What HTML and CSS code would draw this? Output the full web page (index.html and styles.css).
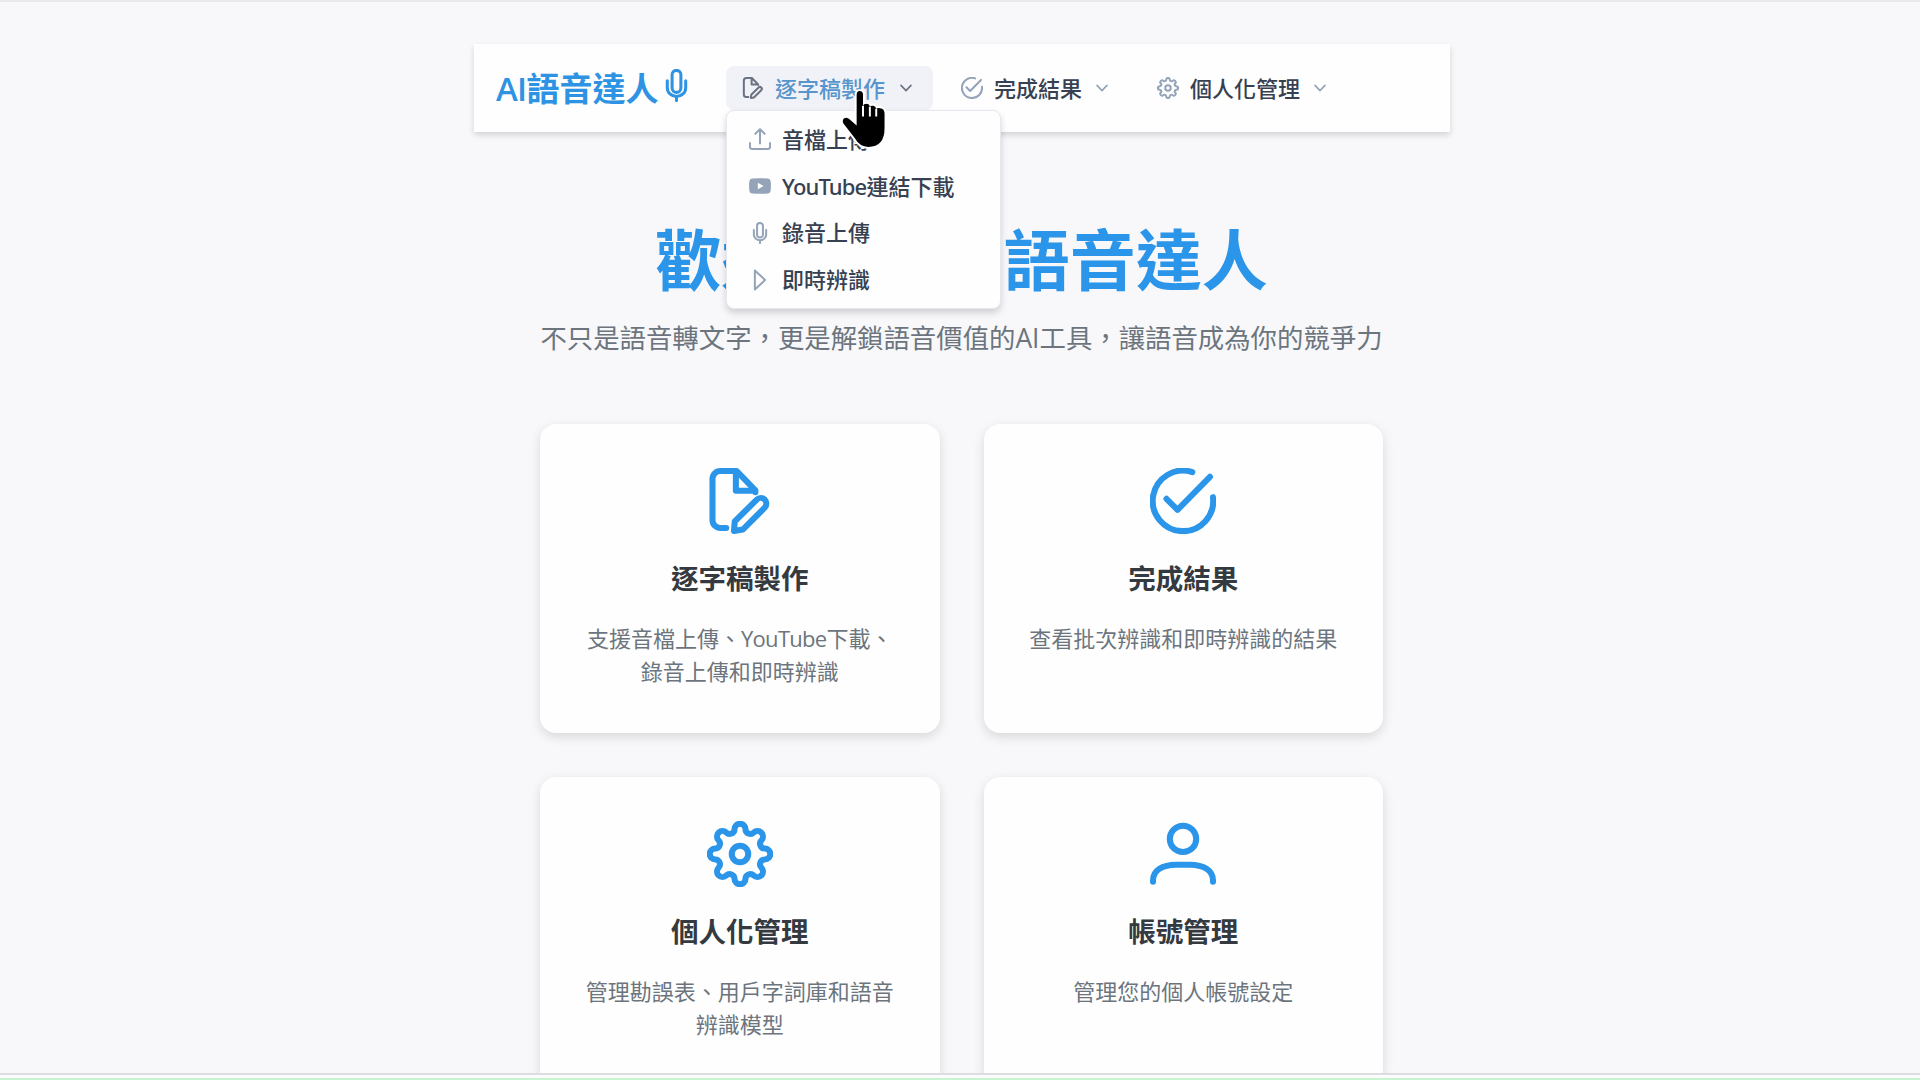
FILE: index.html
```
<!DOCTYPE html>
<html lang="zh-Hant">
<head>
  <meta charset="UTF-8">
  <title>AI語音達人</title>
  <link rel="stylesheet" href="styles.css">
</head>
<body>

  <!-- Icon set -->
  <svg class="sprite" xmlns="http://www.w3.org/2000/svg">
    <symbol id="i-edit" viewBox="-12 -12 24 24">
      <path d="M-5 9.8H-7.2A2.8 2.8 0 0 1-10 7V-8.1A2.8 2.8 0 0 1-7.2-10.9H-1.2L5.6-3.9V-3.2M-1.5-10.5V-3.7H5.4"/>
      <path d="M-2.2 10.9L-1.9 7.4L6.1-.5A2 2 0 0 1 9 2.4L1 10.4Z"/>
    </symbol>
    <symbol id="i-check" viewBox="-12 -12 24 24">
      <path d="M3.4-10.5A11 11 0 1 0 10.9-1.4M-6-.8L-2 3.2L9.8-8.8"/>
    </symbol>
    <symbol id="i-cog" viewBox="-12 -12 24 24">
      <path d="M-2-9A2 2 0 0 1 2-9C2-7.5 3.89-6.72 4.95-7.78A2 2 0 0 1 7.78-4.95C6.72-3.89 7.5-2 9-2A2 2 0 0 1 9 2C7.5 2 6.72 3.89 7.78 4.95A2 2 0 0 1 4.95 7.78C3.89 6.72 2 7.5 2 9A2 2 0 0 1-2 9C-2 7.5-3.89 6.72-4.95 7.78A2 2 0 0 1-7.78 4.95C-6.72 3.89-7.5 2-9 2A2 2 0 0 1-9-2C-7.5-2-6.72-3.89-7.78-4.95A2 2 0 0 1-4.95-7.78C-3.89-6.72-2-7.5-2-9Z"/>
      <circle r="3"/>
    </symbol>
    <symbol id="i-user" viewBox="-12 -12 24 24">
      <circle cy="-5.5" r="4.8"/>
      <path d="M-10.9 10.1V9.6C-10.9 6-7.5 3.9-2.5 3.9H2.5C7.5 3.9 10.9 6 10.9 9.6V10.1"/>
    </symbol>
    <symbol id="i-mic" viewBox="-12 -12 24 24">
      <rect x="-3.2" y="-11" width="6.4" height="16" rx="3.2"/>
      <path d="M-6.7-3.4V1.6A6.7 6.4 0 0 0 6.7 1.6V-3.4M0 8V11"/>
    </symbol>
    <symbol id="i-upload" viewBox="-12 -12 24 24">
      <path d="M-11 4.5V8.5A2.4 2.4 0 0 0-8.6 10.9H8.6A2.4 2.4 0 0 0 11 8.5V4.5M0 5V-10.6M-5-5.8L0-10.8L5-5.8"/>
    </symbol>
    <symbol id="i-youtube" viewBox="-12 -12 24 24">
      <path fill="currentColor" stroke="none" fill-rule="evenodd" d="M-8.6-8.2Q0-8.9 8.6-8.2Q11.3-8 11.6-5.2Q12.2 0 11.6 5.2Q11.3 8 8.6 8.2Q0 8.9-8.6 8.2Q-11.3 8-11.6 5.2Q-12.2 0-11.6-5.2Q-11.3-8-8.6-8.2ZM-2.4-3.6V3.6L3.9 0Z"/>
    </symbol>
    <symbol id="i-play" viewBox="-12 -12 24 24">
      <path d="M-5.6-10.4V10.4L5.6 0Z"/>
    </symbol>
    <symbol id="i-down" viewBox="-7 -7 14 14">
      <path d="M-5-2.6L0 2.6L5-2.6"/>
    </symbol>
  </svg>

  <div class="page">
    <nav class="navbar">
      <div class="logo"><span class="latin">AI</span>語音達人<svg class="icon"><use href="#i-mic"/></svg></div>
      <ul class="menu">
        <li class="menu-item active">
          <svg class="icon"><use href="#i-edit"/></svg>
          <span>逐字稿製作</span>
          <svg class="chevron"><use href="#i-down"/></svg>
          <ul class="submenu">
            <li><svg class="icon"><use href="#i-upload"/></svg>音檔上傳</li>
            <li><svg class="icon"><use href="#i-youtube"/></svg><span class="latin">YouTube</span>連結下載</li>
            <li><svg class="icon"><use href="#i-mic"/></svg>錄音上傳</li>
            <li><svg class="icon"><use href="#i-play"/></svg>即時辨識</li>
          </ul>
        </li>
        <li class="menu-item">
          <svg class="icon"><use href="#i-check"/></svg>
          <span>完成結果</span>
          <svg class="chevron"><use href="#i-down"/></svg>
        </li>
        <li class="menu-item">
          <svg class="icon"><use href="#i-cog"/></svg>
          <span>個人化管理</span>
          <svg class="chevron"><use href="#i-down"/></svg>
        </li>
      </ul>
    </nav>

    <main class="home">
      <h1>歡迎使用 AI語音達人</h1>
      <p class="subtitle">不只是語音轉文字，更是解鎖語音價值的AI工具，讓語音成為你的競爭力</p>

      <div class="cards">
        <div class="card">
          <svg class="icon"><use href="#i-edit"/></svg>
          <h2>逐字稿製作</h2>
          <p>支援音檔上傳、<span class="latin">YouTube</span>下載、錄音上傳和即時辨識</p>
        </div>
        <div class="card">
          <svg class="icon"><use href="#i-check"/></svg>
          <h2>完成結果</h2>
          <p>查看批次辨識和即時辨識的結果</p>
        </div>
        <div class="card">
          <svg class="icon"><use href="#i-cog"/></svg>
          <h2>個人化管理</h2>
          <p>管理勘誤表、用戶字詞庫和語音辨識模型</p>
        </div>
        <div class="card">
          <svg class="icon"><use href="#i-user"/></svg>
          <h2>帳號管理</h2>
          <p>管理您的個人帳號設定</p>
        </div>
      </div>
    </main>
  </div>
  <div class="bottom-strip"></div>

  <!-- Hand pointer -->
  <svg class="pointer" viewBox="0 0 48 62">
    <path class="outline" d="M17 6Q17 2 20 2Q23.5 2 23.5 6V17Q24 15 27 15Q30 15 30.5 18Q31.5 16.500 34 17Q36.500 17.500 37 20Q38.500 19 41 19.500Q45.500 20 45.500 25V40Q45.500 59 29 59Q20 59 15 50L3.500 35Q2 32 4 30Q7 28 10 31L17 37Z"/>
    <path class="fingers" d="M23.5 17V28M30.500 18V28M37 20V28"/>
  </svg>

</body>
</html>
```
FILE: styles.css
```
* {
  box-sizing: border-box;
}
html {
  font-size: 22px;
}
body {
  margin: 0;
  height: 1080px;
  overflow: hidden;
  display: flex;
  flex-direction: column;
  background: #f8f8fb;
  color: #495057;
  font-family: "Open Sans", "Noto Sans CJK TC", sans-serif;
  line-height: 1.5;
}
ul {
  list-style: none;
  margin: 0;
  padding: 0;
}
.sprite {
  display: none;
}
.icon, .chevron {
  flex: none;
  fill: none;
  stroke: currentColor;
  stroke-width: 2.2;
  stroke-linecap: round;
  stroke-linejoin: round;
}
.latin {
  letter-spacing: -0.7px;
}
.page {
  flex: 1;
  min-height: 0;
  overflow: hidden;
  padding-top: 42px;
  border-top: 2px solid #e9e9ec;
}

/* Navigation */
.navbar {
  width: 976px;
  height: 88px;
  margin-left: 474px;
  padding: 0 22px;
  display: flex;
  align-items: center;
  background: #fefefe;
  box-shadow: 0 3px 6px rgba(0, 0, 0, 0.15);
}
.logo {
  width: 230px;
  display: flex;
  align-items: center;
  font-size: 1.5rem;
  font-weight: 700;
  line-height: 1;
  color: #2f93e3;
  white-space: nowrap;
}
.logo .latin {
  font-weight: 600;
}
.logo .icon {
  width: 33px;
  height: 33px;
  margin: -6px 0 0 1px;
}
.menu {
  display: flex;
  gap: 11px;
}
.menu-item {
  position: relative;
  height: 44px;
  padding: 0 20px 0 16px;
  display: flex;
  align-items: center;
  border-radius: 8px;
  font-weight: 500;
  color: #374151;
}
.menu-item .icon {
  width: 22px;
  height: 22px;
  margin-right: 11px;
  color: #94a3b8;
}
.menu-item .chevron {
  width: 14px;
  height: 14px;
  margin-left: 14px;
  stroke-width: 1.6;
  color: #94a3b8;
}
.menu-item + .menu-item {
  padding-left: 17px;
}
.menu-item + .menu-item .chevron {
  margin-left: 13px;
}
.active {
  background: #f1f2f7;
  color: #5795cc;
}
.menu-item.active > .icon, .menu-item.active > .chevron {
  color: #6b7280;
}
.submenu {
  position: absolute;
  top: 44px;
  left: 0;
  width: 275px;
  padding: 5px;
  z-index: 2;
  background: #fefefe;
  border: 1px solid #e5e8ee;
  border-radius: 8px;
  box-shadow: 0 4px 7px rgba(0, 0, 0, 0.16);
  color: #374151;
}
.submenu li {
  height: 46.8px;
  padding-left: 17px;
  display: flex;
  align-items: center;
}
.submenu .latin {
  font-family: "Noto Sans", sans-serif;
  letter-spacing: -0.85px;
}

/* Home */
.home {
  width: 843px;
  margin: 78px 0 0 540px;
  text-align: center;
}
h1 {
  margin: 0;
  font-size: 3rem;
  line-height: 99px;
  color: #2b95e9;
  white-space: nowrap;
}
.subtitle {
  margin: 9px 0 0;
  font-size: 1.2rem;
  line-height: 40px;
  color: #6c757d;
  white-space: nowrap;
}
.cards {
  margin-top: 66px;
  display: grid;
  grid-template-columns: 1fr 1fr;
  grid-auto-rows: 309px;
  gap: 44px;
}
.card {
  padding: 44px;
  background: #fefefe;
  border-radius: 16px;
  box-shadow: 0 4px 12px rgba(0, 0, 0, 0.13);
}
.card .icon {
  display: block;
  width: 66px;
  height: 66px;
  margin: 0 auto 28px;
  color: #2b95e9;
}
.card h2 {
  margin: 0 0 27px;
  font-size: 1.25rem;
  line-height: 33px;
  color: #343a40;
}
.card p {
  margin: 0 -2px;
  color: #6c757d;
}

.bottom-strip {
  height: 7px;
  background: #fbfdfc;
  border-top: 2px solid #dcdddf;
  border-bottom: 2px solid #c8f5cf;
}

.pointer {
  position: absolute;
  left: 840px;
  top: 89px;
  width: 47px;
  height: 61px;
  z-index: 3;
  overflow: visible;
  fill: #000;
  stroke: #fff;
  stroke-width: 2;
  stroke-linejoin: round;
}
.pointer .outline {
  stroke-width: 4;
  paint-order: stroke;
}
.pointer .fingers {
  fill: none;
}
```
